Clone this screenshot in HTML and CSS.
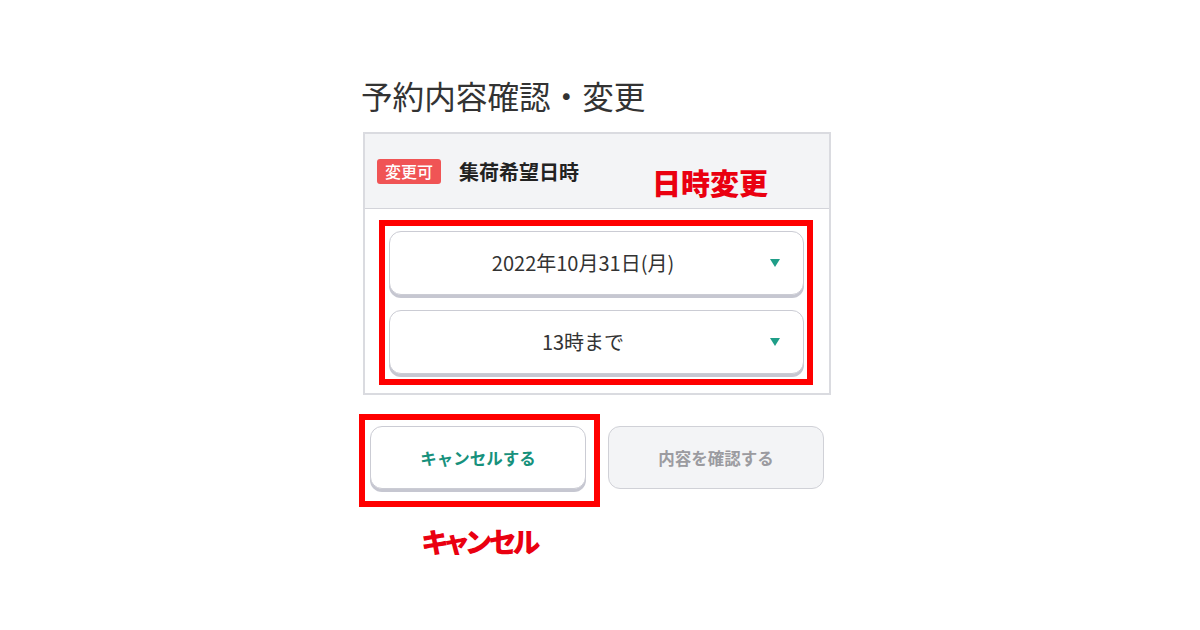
FILE: index.html
```html
<!DOCTYPE html>
<html lang="ja">
<head>
    <meta charset="UTF-8">
    <meta name="viewport" content="width=device-width, initial-scale=1.0">
    <title>予約内容確認・変更</title>
    <link rel="stylesheet" href="styles.css">
</head>
<body>
    <div class="page">
        <h1>予約内容確認・変更</h1>

        <div class="card">
            <div class="card-head">
                <span class="badge">変更可</span>
                <span class="card-title">集荷希望日時</span>
            </div>
            <div class="card-body">
                <div class="mark mark-selects">
                    <div class="select">2022年10月31日(月)<span class="arrow"></span></div>
                    <div class="select">13時まで<span class="arrow"></span></div>
                </div>
            </div>
            <div class="note note-date">日時変更</div>
        </div>

        <div class="actions">
            <div class="cancel-col">
                <div class="mark mark-cancel">
                    <button class="btn btn-cancel">キャンセルする</button>
                </div>
                <div class="note">キャンセル</div>
            </div>
            <button class="btn btn-confirm">内容を確認する</button>
        </div>
    </div>
</body>
</html>
```

FILE: styles.css
```css
body {
    margin: 0;
    background-color: #fff;
    font-family: "Noto Sans CJK JP", "Noto Sans", sans-serif;
    color: #333;
}
.page {
    width: 468px;
    margin-left: 363px;
    padding-top: 75px;
}
h1 {
    margin: 0 0 17px -2px;
    font-size: 31.6px;
    font-weight: 400;
    line-height: 40px;
    color: #333;
}
.card {
    position: relative;
    border: 2px solid #dadbe0;
}
.card-head {
    height: 74px;
    display: flex;
    align-items: center;
    padding-left: 12px;
    background-color: #f3f4f6;
    border-bottom: 1px solid #d3d4da;
}
.badge {
    width: 64px;
    height: 25px;
    line-height: 25px;
    text-align: center;
    background-color: #f05455;
    color: #fff;
    font-size: 16px;
    font-weight: 500;
    border-radius: 3px;
}
.card-title {
    margin-left: 18px;
    font-size: 20px;
    font-weight: 700;
    color: #222;
}
.card-body {
    padding: 11px 16px 8px 14px;
}
.mark {
    border: 6px solid #f00;
}
.mark-selects {
    display: flex;
    flex-direction: column;
    gap: 15px;
    padding: 5px 3px 5px 4px;
}
.select {
    position: relative;
    height: 62px;
    line-height: 62px;
    padding-right: 27px;
    text-align: center;
    font-size: 20px;
    color: #333;
    background-color: #fff;
    border: 1px solid #cbccd4;
    border-radius: 12px;
    box-shadow: 0 3px 0 #c6c7d1;
}
.arrow {
    position: absolute;
    right: 23px;
    top: 27px;
    width: 0;
    height: 0;
    border-left: 5px solid transparent;
    border-right: 5px solid transparent;
    border-top: 8px solid #1f9e88;
}
.note {
    color: #ea0010;
    font-size: 29px;
    font-weight: 900;
    line-height: 1;
    font-feature-settings: "palt";
}
.note-date {
    position: absolute;
    left: 287px;
    top: 34px;
}
.actions {
    display: flex;
    align-items: flex-start;
    gap: 8px;
    margin-top: 19px;
    margin-left: -4px;
}
.cancel-col {
    display: flex;
    flex-direction: column;
    align-items: center;
}
.cancel-col .note {
    margin-top: 20px;
    font-size: 28px;
    letter-spacing: -2.6px;
}
.mark-cancel {
    padding: 6px 8px 12px 5px;
}
.btn {
    width: 216px;
    height: 63px;
    font-family: inherit;
    font-size: 16.5px;
    font-weight: 700;
    border-radius: 12px;
    cursor: pointer;
}
.btn-cancel {
    display: block;
    color: #17917c;
    background-color: #fff;
    border: 1px solid #cbccd4;
    box-shadow: 0 3px 0 #c6c7d1;
}
.btn-confirm {
    margin-top: 12px;
    color: #9b9ba0;
    background-color: #f3f4f6;
    border: 1px solid #d0d1d7;
}
```
